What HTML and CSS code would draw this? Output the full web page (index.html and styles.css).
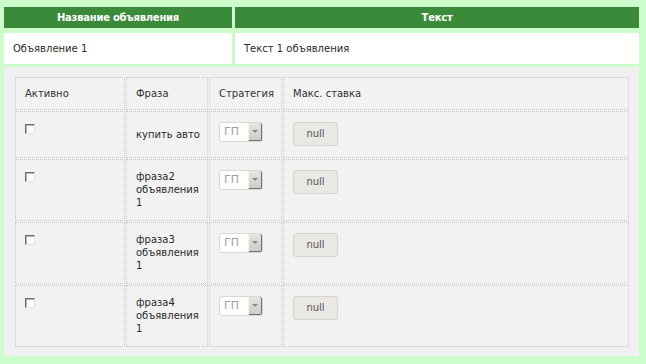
FILE: index.html
```html
<!doctype html>
<html>
<head>
    <meta charset="utf-8">
    <link rel="stylesheet" href="styles.css">
</head>
<body>
    <div class="page">
        <div class="row head">
            <div class="cell">Название объявления</div>
            <div class="cell">Текст</div>
        </div>
        <div class="row ad">
            <div class="cell">Объявление 1</div>
            <div class="cell">Текст 1 объявления</div>
        </div>
        <div class="panel">
            <table class="phrases">
                <thead>
                    <tr>
                        <th class="c-act">Активно</th>
                        <th class="c-phrase">Фраза</th>
                        <th class="c-strat">Стратегия</th>
                        <th class="c-bid">Макс. ставка</th>
                    </tr>
                </thead>
                <tbody>
                    <tr>
                        <td><span class="chk"></span></td>
                        <td class="phrase">купить авто</td>
                        <td><span class="sel"><span class="sel-val">ГП</span><span class="sel-btn"></span></span></td>
                        <td><span class="btn">null</span></td>
                    </tr>
                    <tr>
                        <td><span class="chk"></span></td>
                        <td class="phrase">фраза2 объявления 1</td>
                        <td><span class="sel"><span class="sel-val">ГП</span><span class="sel-btn"></span></span></td>
                        <td><span class="btn">null</span></td>
                    </tr>
                    <tr>
                        <td><span class="chk"></span></td>
                        <td class="phrase">фраза3 объявления 1</td>
                        <td><span class="sel"><span class="sel-val">ГП</span><span class="sel-btn"></span></span></td>
                        <td><span class="btn">null</span></td>
                    </tr>
                    <tr>
                        <td><span class="chk"></span></td>
                        <td class="phrase">фраза4 объявления 1</td>
                        <td><span class="sel"><span class="sel-val">ГП</span><span class="sel-btn"></span></span></td>
                        <td><span class="btn">null</span></td>
                    </tr>
                </tbody>
            </table>
        </div>
    </div>
</body>
</html>
```

FILE: styles.css
```css
html, body {
    margin:0;
    background:#cdfccd;
}

body {
    font-family:"DejaVu Sans", Verdana, sans-serif;
    font-size:10px;
    color:#2a2a2a;
}

.page {
    padding:7px 7px 8px 4px;
}

.row {
    display:grid;
    grid-template-columns:228px 1fr;
    column-gap:3px;
}

.head .cell {
    background:#3a8a3a;
    color:#fff;
    font-weight:bold;
    letter-spacing:-0.25px;
    text-align:center;
    line-height:21px;
}

.ad {
    margin-top:5px;
}

.ad .cell {
    background:#fff;
    line-height:31px;
    padding-left:9px;
}

.panel {
    margin-top:3px;
    background:#f0f0f0;
    padding:9px 9px 8px 10px;
}

.phrases {
    width:100%;
    table-layout:fixed;
    border-collapse:separate;
    border-spacing:1px;
}

.phrases th, .phrases td {
    box-sizing:border-box;
    border:1px dotted #c9c9c9;
    background:#f2f2f2;
    text-align:left;
    font-weight:normal;
    vertical-align:top;
}

.phrases th {
    padding:9px 9px 8px;
    line-height:14px;
    vertical-align:middle;
    color:#333;
}

.phrases td {
    padding:10px 9px 11px;
    line-height:13px;
}

.phrases tbody tr:first-child td {
    height:47px;
}

.phrases td.phrase {
    vertical-align:middle;
    padding-right:4px;
}

.c-act { width:110px; }
.c-phrase { width:82px; }
.c-strat { width:73px; }

.chk {
    display:block;
    margin-top:2px;
    width:10px;
    height:10px;
    box-sizing:border-box;
    background:#fff;
    border:1px solid;
    border-color:#6a6a6a #e2e2e2 #e2e2e2 #6a6a6a;
    box-shadow:inset 1px 1px 0 #b5b5b5;
}

.sel {
    display:flex;
    width:44px;
    height:20px;
    box-sizing:border-box;
    background:#fff;
    border:1px solid #d8d8d8;
    border-radius:3px;
}

.sel-val {
    flex:1;
    padding-left:4px;
    line-height:18px;
    font-size:11px;
    color:#a0a0a0;
}

.sel-btn {
    position:relative;
    width:14px;
    box-sizing:border-box;
    background:linear-gradient(#e6e4de, #cfccc4);
    border-right:1px solid #6f6f6f;
    border-bottom:1px solid #6f6f6f;
    border-left:1px solid #f4f4f4;
    border-radius:0 2px 2px 0;
}

.sel-btn:after {
    content:"";
    position:absolute;
    left:3px;
    top:7px;
    border-left:3px solid transparent;
    border-right:3px solid transparent;
    border-top:3px solid #8a8a8a;
}

.btn {
    display:block;
    width:45px;
    height:24px;
    box-sizing:border-box;
    background:#e9e8e3;
    border:1px solid #d5d3cb;
    border-radius:3px;
    color:#555;
    text-align:center;
    line-height:22px;
}
```
